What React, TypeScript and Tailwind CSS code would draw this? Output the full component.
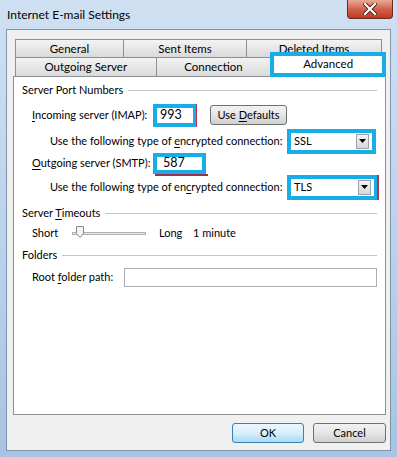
import React from 'react';

const U: React.FC<{ children: React.ReactNode }> = ({ children }) => <span className="underline underline-offset-2">{children}</span>;

const GroupHeader: React.FC<{ children: React.ReactNode; className?: string }> = ({ children, className }) => (
  <div className={`flex items-center pl-[8px] pr-[8px] ${className ?? ''}`}>
    <span className="whitespace-nowrap">{children}</span>
    <div className="flex-1 h-px bg-[#c5c5c5] ml-[5px]" />
  </div>
);

const Combo: React.FC<{ value: string; redEdge?: boolean; w: string }> = ({ value, redEdge, w }) => (
  <div className={`relative ${w} h-[25px] shrink-0 border-[4px] border-[#17ade6] bg-white flex items-center`}>
    <span className="pl-[3px] flex-1 text-black">{value}</span>
    <div className="w-[13px] h-[15px] mr-[3px] border border-[#9aa3ad] bg-gradient-to-b from-[#f4f4f4] to-[#d7d7d7] flex items-center justify-center">
      <svg width="7" height="4" viewBox="0 0 7 4"><path d="M0 0h7L3.5 4z" fill="#000" /></svg>
    </div>
    {redEdge && <div className="absolute -right-[5px] top-[-4px] w-[2px] h-[25px] bg-[#b8304a]" />}
  </div>
);

const TabBtn: React.FC<{ label: string; w: string }> = ({ label, w }) => (
  <div className={`${w} h-full -ml-px first:ml-0 border border-b-0 border-[#8c8f96] bg-gradient-to-b from-[#f3f3f3] to-[#dadada] flex items-center justify-center text-black`}>
    {label}
  </div>
);

const WinButton: React.FC<{ children: React.ReactNode; primary?: boolean; w: string }> = ({ children, primary, w }) => (
  <div
    className={`${w} h-[20px] shrink-0 rounded-[3px] border flex items-center justify-center text-black ${
      primary
        ? 'border-[#3c7fb1] bg-gradient-to-b from-[#eaf6fd] via-[#d9f0fc] to-[#a7d9f5]'
        : 'border-[#707070] bg-gradient-to-b from-[#f2f2f2] via-[#e6e6e6] to-[#cfcfcf]'
    }`}
  >
    <span className="whitespace-nowrap">{children}</span>
  </div>
);

export default function App() {
  return (
    <div
      className="w-[397px] h-[457px] relative overflow-hidden bg-gradient-to-b from-[#cfe0f2] via-[#bcd3ec] to-[#a9c3e0] text-[11px] text-black"
      style={{ fontFamily: 'Lato, "Liberation Sans", sans-serif' }}
    >
      {/* title bar */}
      <div className="h-[29px] flex items-center pl-[7px] text-[12px] text-black">Internet E-mail Settings</div>
      <div className="absolute top-0 right-[4px] w-[46px] h-[19px] rounded-b-[4px] border border-t-0 border-[#6d2a20] bg-gradient-to-b from-[#e9a999] via-[#d0634d] to-[#c2371c] flex items-center justify-center">
        <svg width="14" height="12" viewBox="0 0 14 12">
          <path d="M2 1l10 10M12 1L2 11" stroke="#4a1a12" strokeWidth="4" strokeLinecap="square" />
          <path d="M2 1l10 10M12 1L2 11" stroke="#fff" strokeWidth="2.2" strokeLinecap="square" />
        </svg>
      </div>

      {/* client */}
      <div className="mx-[6px] h-[422px] border border-[#7e93ad] bg-[#f0f0f0] flex flex-col">
        <div className="pl-[6px] pr-[4px] pt-[9px]">
          {/* tab rows */}
          <div className="flex h-[18px] pl-[2px] text-[11.5px]">
            <TabBtn label="General" w="w-[109px]" />
            <TabBtn label="Sent Items" w="w-[124px]" />
            <TabBtn label="Deleted Items" w="w-[136px]" />
          </div>
          <div className="flex h-[19px] pl-[2px] items-end text-[11.5px]">
            <TabBtn label="Outgoing Server" w="w-[142px]" />
            <TabBtn label="Connection" w="w-[116px]" />
            <div className="relative z-10 -ml-px -mb-px w-[116px] h-[25px] border-[4px] border-[#17ade6] bg-white flex items-start justify-center leading-[15px]">
              Advanced
            </div>
          </div>

          {/* panel */}
          <div className="h-[339px] border border-[#8c8f96] bg-white flex flex-col">
            <GroupHeader className="mt-[4px] h-[18px]">Server Port Numbers</GroupHeader>

            <div className="h-[32px] flex items-center pl-[18px]">
              <span className="w-[121px] whitespace-nowrap"><U>I</U>ncoming server (IMAP):</span>
              <div className="relative w-[44px] h-[23px] shrink-0 border-[4px] border-[#17ade6] bg-white flex items-center pl-[3px] text-[12.5px]">
                993
                <div className="absolute -right-[4px] top-[-4px] w-[1px] h-[23px] bg-[#b8304a]" />
              </div>
              <div className="ml-[13px]">
                <WinButton w="w-[77px]">Use <U>D</U>efaults</WinButton>
              </div>
            </div>

            <div className="h-[20px] flex items-center pl-[36px]">
              <span className="w-[237px] whitespace-nowrap">Use the following type of <U>e</U>ncrypted connection:</span>
              <Combo value="SSL" w="w-[89px]" />
            </div>

            <div className="h-[24px] flex items-center pl-[18px]">
              <span className="w-[121px] whitespace-nowrap"><U>O</U>utgoing server (SMTP):</span>
              <div className="relative w-[53px] h-[21px] shrink-0 border-[4px] border-[#17ade6] bg-white flex items-center pl-[6px] text-[12.5px]">
                587
                <div className="absolute left-[-2px] -bottom-[6px] w-[53px] h-[2px] bg-[#9b2f4a]" />
              </div>
            </div>

            <div className="h-[24px] flex items-center pl-[36px]">
              <span className="w-[237px] whitespace-nowrap">Use the following type of en<U>c</U>rypted connection:</span>
              <Combo value="TLS" w="w-[91px]" redEdge />
            </div>

            <GroupHeader className="h-[28px]">Server <U>T</U>imeouts</GroupHeader>

            <div className="h-[12px] flex items-center pl-[18px]">
              <span className="w-[40px]">Short</span>
              <div className="relative w-[74px] h-[12px] flex items-center">
                <div className="w-full h-[3px] border border-[#b0b0b0] bg-[#e8e8e8]" />
                <svg className="absolute left-[4px] top-[-1px]" width="8" height="12" viewBox="0 0 8 12">
                  <path d="M0.5 0.5h7v7l-3.5 4l-3.5-4z" fill="#f4f4f4" stroke="#8a8a8a" />
                </svg>
              </div>
              <span className="ml-[13px] w-[34px]">Long</span>
              <span className="whitespace-nowrap">1 minute</span>
            </div>

            <GroupHeader className="h-[32px]">Folders</GroupHeader>

            <div className="h-[12px] flex items-center pl-[18px]">
              <span className="w-[92px] whitespace-nowrap">Root <U>f</U>older path:</span>
              <div className="w-[253px] h-[19px] border border-[#abadb3] bg-white shrink-0" />
            </div>
          </div>
        </div>

        {/* footer buttons */}
        <div className="flex justify-end gap-[9px] pr-[4px] mt-[8px]">
          <WinButton primary w="w-[72px]">OK</WinButton>
          <WinButton w="w-[73px]">Cancel</WinButton>
        </div>
      </div>
    </div>
  );
}
